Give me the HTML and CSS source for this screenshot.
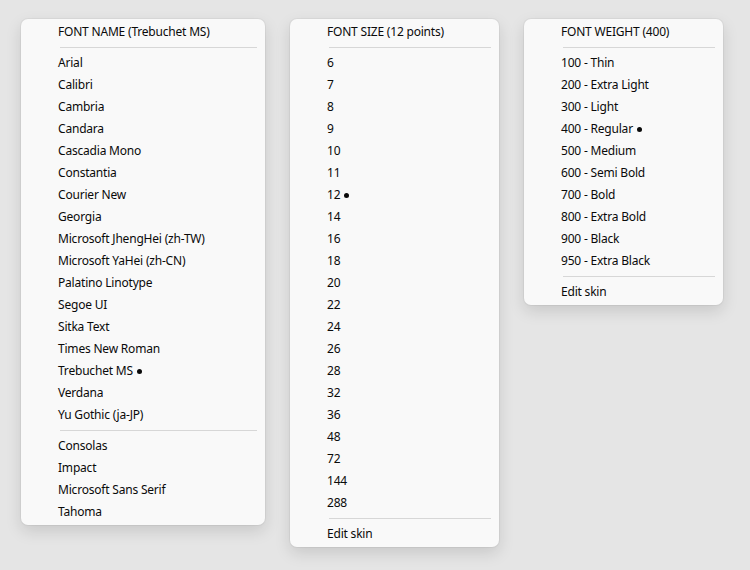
FILE: index.html
```html
<!DOCTYPE html>
<html>
<head>
<meta charset="utf-8">
<link rel="stylesheet" href="styles.css">
</head>
<body>
<div class="desk">
  <div class="menu menu-name">
    <div class="item head">FONT NAME (Trebuchet MS)</div>
    <div class="sep"></div>
    <div class="item">Arial</div>
    <div class="item">Calibri</div>
    <div class="item">Cambria</div>
    <div class="item">Candara</div>
    <div class="item">Cascadia Mono</div>
    <div class="item">Constantia</div>
    <div class="item">Courier New</div>
    <div class="item">Georgia</div>
    <div class="item">Microsoft JhengHei (zh-TW)</div>
    <div class="item">Microsoft YaHei (zh-CN)</div>
    <div class="item">Palatino Linotype</div>
    <div class="item">Segoe UI</div>
    <div class="item">Sitka Text</div>
    <div class="item">Times New Roman</div>
    <div class="item">Trebuchet MS<span class="dot"></span></div>
    <div class="item">Verdana</div>
    <div class="item">Yu Gothic (ja-JP)</div>
    <div class="sep"></div>
    <div class="item">Consolas</div>
    <div class="item">Impact</div>
    <div class="item">Microsoft Sans Serif</div>
    <div class="item">Tahoma</div>
  </div>
  <div class="menu menu-size">
    <div class="item head">FONT SIZE (12 points)</div>
    <div class="sep"></div>
    <div class="item">6</div>
    <div class="item">7</div>
    <div class="item">8</div>
    <div class="item">9</div>
    <div class="item">10</div>
    <div class="item">11</div>
    <div class="item">12<span class="dot"></span></div>
    <div class="item">14</div>
    <div class="item">16</div>
    <div class="item">18</div>
    <div class="item">20</div>
    <div class="item">22</div>
    <div class="item">24</div>
    <div class="item">26</div>
    <div class="item">28</div>
    <div class="item">32</div>
    <div class="item">36</div>
    <div class="item">48</div>
    <div class="item">72</div>
    <div class="item">144</div>
    <div class="item">288</div>
    <div class="sep"></div>
    <div class="item">Edit skin</div>
  </div>
  <div class="menu menu-weight">
    <div class="item head">FONT WEIGHT (400)</div>
    <div class="sep"></div>
    <div class="item">100 - Thin</div>
    <div class="item">200 - Extra Light</div>
    <div class="item">300 - Light</div>
    <div class="item">400 - Regular<span class="dot"></span></div>
    <div class="item">500 - Medium</div>
    <div class="item">600 - Semi Bold</div>
    <div class="item">700 - Bold</div>
    <div class="item">800 - Extra Bold</div>
    <div class="item">900 - Black</div>
    <div class="item">950 - Extra Black</div>
    <div class="sep"></div>
    <div class="item">Edit skin</div>
  </div>
</div>
</body>
</html>
```
FILE: styles.css
```css
html, body {
  margin: 0;
  padding: 0;
  background: #e5e5e5;
}
body {
  width: 750px;
  height: 570px;
  overflow: hidden;
  font-family: "Noto Sans", "Segoe UI", sans-serif;
  font-size: 12px;
  letter-spacing: -0.2px;
  color: #0a0a0a;
}
.desk {
  display: flex;
  align-items: flex-start;
  gap: 25px;
  padding: 19px 0 0 21px;
}
.menu {
  box-sizing: border-box;
  background: #f9f9f9;
  border-radius: 7px;
  padding: 2px 0;
  box-shadow: 0 0 0 1px rgba(0,0,0,0.04), 0 6px 16px rgba(0,0,0,0.13);
}
.menu-name { width: 244px; }
.menu-size { width: 209px; }
.menu-weight { width: 199px; }
.item {
  height: 22px;
  line-height: 22px;
  padding-left: 37px;
  white-space: nowrap;
  display: flex;
  align-items: center;
}
.sep {
  height: 1px;
  background: #d7d7d7;
  margin: 4px 8px 4px 39px;
}
.dot {
  display: inline-block;
  width: 5px;
  height: 5px;
  border-radius: 50%;
  background: #0a0a0a;
  margin-left: 4px;
  margin-top: 1px;
}
```
